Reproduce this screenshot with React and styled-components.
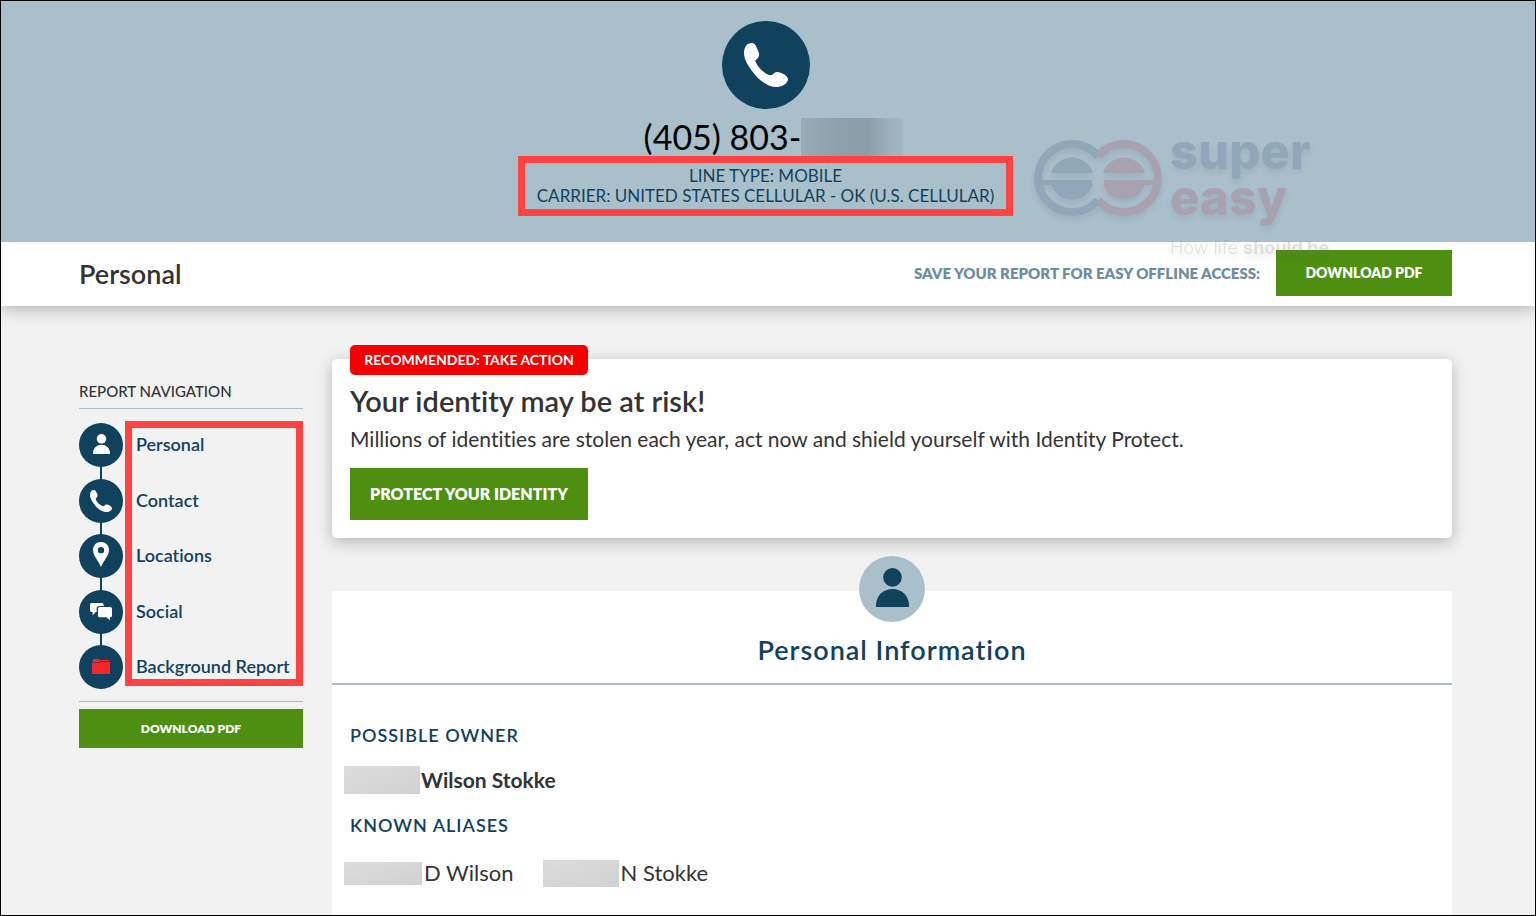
import * as React from "react"
import styled, { createGlobalStyle } from "styled-components"

const GlobalStyle = createGlobalStyle`
  * {
    box-sizing: border-box;
  }

  body {
    margin: 0;
    font-family: Lato, "Liberation Sans", sans-serif;
    font-variant-ligatures: none;
    color: #333;
    background: #f2f2f2;
  }

  h1, h2, h3, p, ul {
    margin: 0;
    padding: 0;
  }
`

const StyledPage = styled.div`
  display: flex;
  flex-direction: column;
  position: relative;
  min-height: 100vh;
  border: 1px solid #000;
  overflow: hidden;
`

const StyledHero = styled.header`
  display: flex;
  flex-direction: column;
  align-items: center;
  position: relative;
  z-index: 1;
  height: 241px;
  padding: 20px 5px 0 0;
  background: #a9c0cb;
`

const StyledCircle = styled.span`
  display: flex;
  flex-shrink: 0;
  align-items: center;
  justify-content: center;
  width: ${(props) => props.$size}px;
  height: ${(props) => props.$size}px;
  border-radius: 50%;
  color: ${(props) => (props.$light ? "#11425d" : "#fff")};
  background: ${(props) => (props.$light ? "#a9c0cb" : "#11425d")};
`

const StyledPhoneNumber = styled.h1`
  display: flex;
  align-items: center;
  height: 47px;
  padding: 9px 0 0 16px;
  font-size: 34px;
  font-weight: 400;
  line-height: 38px;
  color: #000;
`

const StyledHiddenDigits = styled.span`
  width: 102px;
  height: 38px;
  background: linear-gradient(
    90deg,
    #99acb6 0%,
    #8da0a9 40%,
    #8b9ea8 65%,
    #9aaeb8 82%,
    #a3b8c3 100%
  );
`

const StyledCarrier = styled.p`
  padding: 3px 12px;
  border: 7px solid #ff4343;
  font-size: 17px;
  line-height: 20px;
  text-align: center;
  text-transform: uppercase;
  color: #11425d;
`

const StyledTitleBar = styled.div`
  display: flex;
  align-items: center;
  height: 64px;
  padding: 0 83px 2px 78px;
  background: #fff;
  box-shadow: 0 2px 16px rgba(0, 0, 0, 0.3);

  h2 {
    flex: 1;
    padding-top: 2px;
    font-size: 27px;
    font-weight: 600;
    line-height: 32px;
  }

  label {
    margin-right: 16px;
    font-size: 15px;
    font-weight: 800;
    text-transform: uppercase;
    color: #6d8e9d;
  }
`

const StyledButton = styled.button`
  width: ${(props) => props.$width};
  height: ${(props) => props.$height}px;
  padding: 0 0 1px;
  border: 0;
  font-family: inherit;
  font-size: ${(props) => props.$font}px;
  font-weight: 800;
  text-transform: uppercase;
  color: #fff;
  background: #4e8f11;
  cursor: pointer;
`

const StyledContent = styled.div`
  display: flex;
  flex: 1;
  gap: 29px;
  padding: 53px 83px 0 78px;
`

const StyledSidebar = styled.aside`
  flex: 0 0 224px;
  padding-top: 22px;

  h3 {
    height: 28px;
    border-bottom: 1px solid #a9c0cb;
    font-size: 15px;
    font-weight: 500;
    line-height: 20px;
    text-transform: uppercase;
  }
`

const StyledNav = styled.nav`
  position: relative;
  padding: 14px 0 12px;
  border-bottom: 1px solid #a9c0cb;
  margin-bottom: 7px;

  ul {
    display: flex;
    flex-direction: column;
    justify-content: space-between;
    height: 266px;
    list-style: none;
    background: linear-gradient(#11425d, #11425d) 21px 0 / 2px 100% no-repeat;
  }

  a {
    display: flex;
    align-items: center;
    gap: 13px;
    font-size: 18px;
    font-weight: 600;
    line-height: 22px;
    color: #11425d;
    text-decoration: none;
  }
`

const StyledNavLabel = styled.span`
  padding-bottom: 2px;
`

/* red frame lying over the labels */
const StyledNavFrame = styled.div`
  position: absolute;
  top: 12px;
  right: 0;
  left: 46px;
  height: 265px;
  border: 7px solid #ff4343;
  pointer-events: none;
`

const StyledMain = styled.main`
  display: flex;
  flex: 1;
  flex-direction: column;
  min-width: 0;
`

const StyledAlert = styled.section`
  position: relative;
  height: 179px;
  padding: 25px 18px 0;
  border-radius: 5px;
  background: #fff;
  box-shadow: 0 4px 16px rgba(0, 0, 0, 0.25);

  h2 {
    font-size: 29px;
    font-weight: 600;
    line-height: 34px;
  }

  p {
    margin: 6px 0 14px;
    font-size: 21px;
    line-height: 30px;
  }
`

const StyledBadge = styled.span`
  position: absolute;
  top: -14px;
  left: 18px;
  width: 238px;
  border-radius: 5px;
  font-size: 14px;
  font-weight: 700;
  line-height: 30px;
  text-align: center;
  text-transform: uppercase;
  color: #fff;
  background: #f40000;
`

const StyledInfo = styled.section`
  flex: 1;
  margin-top: 53px;
  background: #fff;
`

const StyledInfoHeader = styled.div`
  display: flex;
  flex-direction: column;
  align-items: center;
  height: 94px;
  border-bottom: 2px solid #a9c0cb;

  > span {
    margin-top: -35px;
  }

  h2 {
    margin-top: 11px;
    font-size: 27px;
    font-weight: 600;
    line-height: 34px;
    letter-spacing: 1px;
    color: #11425d;
  }
`

const StyledInfoBody = styled.div`
  padding: 38px 12px 0;

  h3 {
    padding-left: 6px;
    font-size: 18px;
    font-weight: 600;
    line-height: 24px;
    letter-spacing: 1px;
    text-transform: uppercase;
    color: #11425d;
  }
`

const StyledNames = styled.div`
  display: flex;
  gap: 29px;
  padding: ${(props) => (props.$owner ? "19px 0" : "22px 0")};
  font-size: ${(props) => (props.$owner ? 21 : 22)}px;
  font-weight: ${(props) => (props.$owner ? 700 : 400)};
  line-height: 28px;

  p {
    display: flex;
    align-items: center;
    gap: ${(props) => (props.$owner ? 1 : 2)}px;
  }
`

const StyledHiddenName = styled.span`
  width: ${(props) => props.$width}px;
  height: ${(props) => props.$height}px;
  background: linear-gradient(160deg, #dcdcdb, #d0d1d3);
`

const StyledWatermark = styled.div`
  position: absolute;
  z-index: 2;
  top: 128px;
  right: 196px;
  display: flex;
  gap: 8px;
  width: 305px;
  opacity: 0.22;
  filter: drop-shadow(0 4px 3px rgba(40, 60, 90, 0.5));
  pointer-events: none;

  svg {
    flex-shrink: 0;
    margin-top: 9px;
  }
`

const StyledWatermarkText = styled.div`
  font-family: Inter, "Liberation Sans", sans-serif;
  white-space: nowrap;

  strong {
    display: block;
    font-size: 49px;
    font-weight: 800;
    line-height: 46px;
    color: #35507a;
  }

  strong + strong {
    color: #a8384b;
  }

  small {
    display: block;
    margin-top: 15px;
    font-size: 18px;
    font-weight: 300;
    line-height: 24px;
    color: #777;
  }

  b {
    font-weight: 700;
  }
`

const PhoneIcon = ({ size }) => (
  <svg width={size} height={size} viewBox="0 0 132 132" fill="currentColor">
    <path d="M23 0C32 0 36 8 41 20C46 31 47 38 42 44C39 49 33 50 34 55C40 72 62 94 80 97C84 97 87 93 91 90C95 86 103 87 112 90C124 95 132 102 132 109C132 119 118 132 98 132C72 132 44 112 24 84C8 62 0 46 0 30C0 12 9 0 23 0Z" />
  </svg>
)

const PersonIcon = ({ width, height }) => (
  <svg width={width} height={height} viewBox="0 0 99 129" fill="currentColor">
    <circle cx="49.5" cy="28" r="28" />
    <path d="M0 117V109C2 82 22 63 49.5 63S97 82 99 109V117Z" />
  </svg>
)

const PinIcon = () => (
  <svg width="16" height="28" viewBox="0 0 48 84" fill="currentColor">
    <path
      fillRule="evenodd"
      d="M24 0C38 0 48 10 48 24C48 42 30 58 24 75C18 58 0 42 0 24C0 10 10 0 24 0ZM24 15A9.500 9.500 0 1 0 24 34A9.500 9.500 0 1 0 24 15Z"
    />
  </svg>
)

const ChatIcon = () => (
  <svg width="22" height="18" viewBox="0 0 66 54" fill="currentColor">
    <path d="M5 0H36Q41 0 41 5V9H28Q20 9 20 17V27H17L8 37V27H5Q0 27 0 22V5Q0 0 5 0Z" />
    <path d="M29 12H61Q66 12 66 17V38Q66 43 61 43H60V52L49 43H29Q24 43 24 38V17Q24 12 29 12Z" />
  </svg>
)

const FolderIcon = () => (
  <svg width="18" height="17" viewBox="0 0 54 51" fill="#f4262a">
    <path d="M3 7V2Q3 0 6 0H19L24 3H49Q51 3 51 6V7H24L21 10H0V9Q0 7 3 7Z" />
    <path d="M0 11H22L25 9H52Q54 9 54 12V45H0Z" />
  </svg>
)

const navItems = [
  { label: "Personal", icon: <PersonIcon width={17} height={22} /> },
  { label: "Contact", icon: <PhoneIcon size={22} /> },
  { label: "Locations", icon: <PinIcon /> },
  { label: "Social", icon: <ChatIcon /> },
  { label: "Background Report", icon: <FolderIcon /> },
]

const Watermark = () => (
  <StyledWatermark>
    <svg width="128" height="80" viewBox="0 0 128 80" fill="none">
      <path d="M64 62A34 34 0 1 1 64 18" stroke="#35507a" strokeWidth="8" />
      <path
        d="M17 35A22 22 0 0 1 59 35ZM5 42H58V47H6ZM17 46H59A22 22 0 0 1 17 46Z"
        fill="#35507a"
      />
      <path d="M64 18A34 34 0 1 1 64 62" stroke="#a8384b" strokeWidth="8" />
      <path
        d="M69 35A22 22 0 0 1 111 35ZM70 42H123L122 47H70ZM69 46H111A22 22 0 0 1 69 46Z"
        fill="#a8384b"
      />
    </svg>
    <StyledWatermarkText>
      <strong>super</strong>
      <strong>easy</strong>
      <small>
        How life <b>should be</b>
      </small>
    </StyledWatermarkText>
  </StyledWatermark>
)

const App = () => {
  return (
    <StyledPage>
      <GlobalStyle />
      <StyledHero>
        <StyledCircle $size={88}>
          <PhoneIcon size={44} />
        </StyledCircle>
        <StyledPhoneNumber>
          (405) 803-
          <StyledHiddenDigits />
        </StyledPhoneNumber>
        <StyledCarrier>
          Line type: Mobile
          <br />
          Carrier: United States Cellular - OK (U.S. Cellular)
        </StyledCarrier>
      </StyledHero>

      <StyledTitleBar>
        <h2>Personal</h2>
        <label htmlFor="download">Save your report for easy offline access:</label>
        <StyledButton id="download" $width="176px" $height={46} $font={14}>
          Download PDF
        </StyledButton>
      </StyledTitleBar>

      <StyledContent>
        <StyledSidebar>
          <h3>Report Navigation</h3>
          <StyledNav>
            <ul>
              {navItems.map((item) => (
                <li key={item.label}>
                  <a href="#personal">
                    <StyledCircle $size={44}>{item.icon}</StyledCircle>
                    <StyledNavLabel>{item.label}</StyledNavLabel>
                  </a>
                </li>
              ))}
            </ul>
            <StyledNavFrame />
          </StyledNav>
          <StyledButton $width="100%" $height={39} $font={12}>
            Download PDF
          </StyledButton>
        </StyledSidebar>

        <StyledMain>
          <StyledAlert>
            <StyledBadge>Recommended: Take action</StyledBadge>
            <h2>Your identity may be at risk!</h2>
            <p>
              Millions of identities are stolen each year, act now and shield
              yourself with Identity Protect.
            </p>
            <StyledButton $width="238px" $height={52} $font={16}>
              Protect your identity
            </StyledButton>
          </StyledAlert>

          <StyledInfo id="personal">
            <StyledInfoHeader>
              <StyledCircle $size={66} $light>
                <PersonIcon width={33} height={43} />
              </StyledCircle>
              <h2>Personal Information</h2>
            </StyledInfoHeader>
            <StyledInfoBody>
              <h3>Possible Owner</h3>
              <StyledNames $owner>
                <p>
                  <StyledHiddenName $width={76} $height={28} />
                  Wilson Stokke
                </p>
              </StyledNames>
              <h3>Known Aliases</h3>
              <StyledNames>
                <p>
                  <StyledHiddenName $width={78} $height={23} />D Wilson
                </p>
                <p>
                  <StyledHiddenName $width={76} $height={27} />N Stokke
                </p>
              </StyledNames>
            </StyledInfoBody>
          </StyledInfo>
        </StyledMain>
      </StyledContent>
      <Watermark />
    </StyledPage>
  )
}

export default App
